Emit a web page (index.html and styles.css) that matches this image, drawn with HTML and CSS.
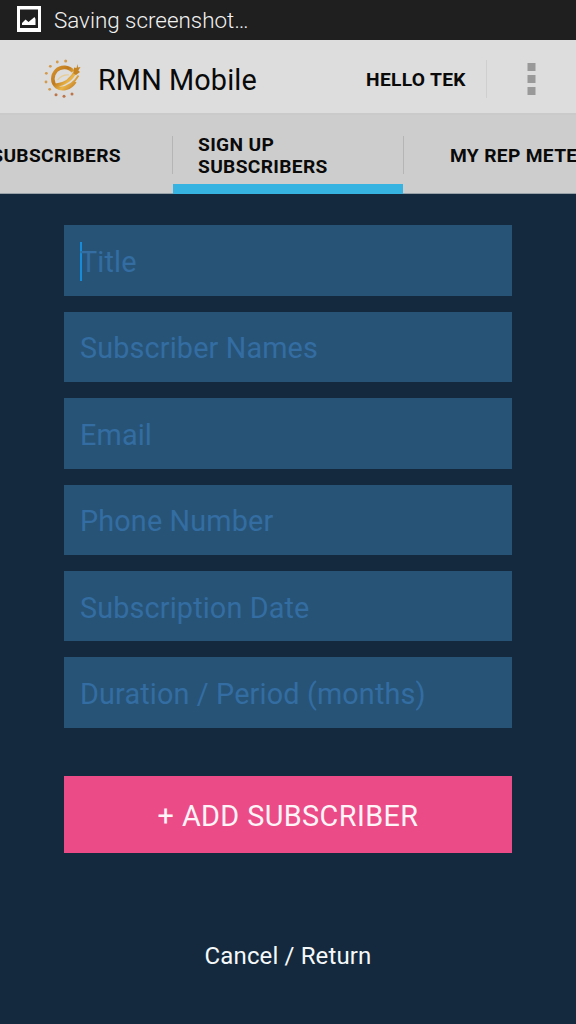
FILE: index.html
```html
<!DOCTYPE html>
<html lang="en">
<head>
<meta charset="utf-8">
<title>RMN Mobile</title>
<link rel="stylesheet" href="styles.css">
</head>
<body>
<div class="screen">
  <div class="status">
    <svg class="status-icon" width="24" height="26" viewBox="0 0 24 26">
      <path fill="#fff" fill-rule="evenodd" d="M0 0H24V26H0ZM3 3.500V22H21V3.500Z"/>
      <path fill="#fff" d="M5 19V17L8.500 13.500L11.500 16L17.500 11L18.500 13V19Z"/>
    </svg>
    <span class="status-text">Saving screenshot…</span>
  </div>
  <header class="appbar">
    <svg class="logo" width="40" height="40" viewBox="0 0 40 40">
      <defs>
        <linearGradient id="gold" x1="8" y1="8" x2="34" y2="32" gradientUnits="userSpaceOnUse">
          <stop offset="0" stop-color="#dc9a35"/>
          <stop offset=".4" stop-color="#c07a1c"/>
          <stop offset=".65" stop-color="#e9b548"/>
          <stop offset="1" stop-color="#b96e1c"/>
        </linearGradient>
      </defs>
      <g fill="#d39a4c">
        <circle cx="22.700" cy="3" r="1.500"/><circle cx="14.300" cy="4" r="1.400"/>
        <circle cx="7.300" cy="8.300" r="1.400"/><circle cx="3.300" cy="15.300" r="1.400"/>
        <circle cx="3" cy="24" r="1.400"/><circle cx="6.700" cy="31.300" r="1.400"/>
        <circle cx="13" cy="36.700" r="1.500" fill="#bd7448"/><circle cx="21" cy="38.300" r="1.500" fill="#bd7448"/>
        <circle cx="29" cy="36" r="1.500" fill="#bd7448"/>
      </g>
      <g fill="none" stroke="url(#gold)">
        <path stroke-width="3.600" d="M30 13.500C26 8.500 18 7.800 13.300 12.500C8.500 17.500 8.700 25 13.500 28.700C19 32.700 27.500 30.500 32 23.500"/>
        <path stroke-width="3.200" d="M13 27C22 26.500 29 20.500 33 12.500"/>
        <path stroke-width="1.800" d="M17 30C26 28.500 31.500 24.500 35.500 17.500"/>
      </g>
      <path fill="#c58424" d="M30.500 15.500L31 9.500L33.500 10L34.500 6L35 9.500L37.500 9L35.300 12.500L37 14L33 17Z"/>
      <path d="M14.500 22Q19 16.500 26 17" fill="none" stroke="#e8cd92" stroke-width="1.200"/>
    </svg>
    <h1 class="title">RMN Mobile</h1>
    <span class="hello">HELLO TEK</span>
    <svg class="more" width="9" height="34" viewBox="0 0 9 34" fill="#999">
      <path d="M.5 1h8v8h-8zM.5 13h8v8h-8zM.5 25h8v8h-8z"/>
    </svg>
  </header>
  <nav class="tabs">
    <div class="tab tab-prev">SUBSCRIBERS</div>
    <div class="tab tab-active">SIGN UP<br>SUBSCRIBERS</div>
    <div class="tab tab-next">MY REP METE</div>
  </nav>
  <main class="form">
    <div class="field field-focus">Title</div>
    <div class="field">Subscriber Names</div>
    <div class="field">Email</div>
    <div class="field">Phone Number</div>
    <div class="field">Subscription Date</div>
    <div class="field">Duration / Period (months)</div>
    <div class="button">+ ADD SUBSCRIBER</div>
    <div class="cancel">Cancel / Return</div>
  </main>
</div>
</body>
</html>
```
FILE: styles.css
```css
* { box-sizing: border-box; }
body { margin: 0; font-family: Roboto, "Liberation Sans", sans-serif; }
.screen {
  width: 576px;
  height: 1024px;
  overflow: hidden;
  display: flex;
  flex-direction: column;
  background: #14293d;
}
.status {
  height: 40px;
  flex: none;
  display: flex;
  align-items: center;
  background: #1f1f1f;
  padding-left: 17px;
}
.status-icon { margin-top: -2px; }
.status-text {
  margin-left: 13px;
  font-size: 22.4px;
  font-weight: 300;
  color: #f2f2f2;
}
.appbar {
  height: 73px;
  flex: none;
  display: flex;
  align-items: center;
  background: #ddd;
  padding-left: 43px;
}
.logo { margin-top: 3px; }
.title {
  margin: 6px 0 0 15px;
  font-size: 28.8px;
  font-weight: 400;
  line-height: 34px;
  letter-spacing: .12px;
  color: #0a0a0a;
  width: 268px;
}
.hello {
  width: 121px;
  height: 38px;
  margin-top: 5px;
  line-height: 39px;
  border-right: 1px solid #cfcfcf;
  font-size: 19.2px;
  font-weight: 700;
  letter-spacing: .33px;
  color: #0a0a0a;
}
.more { margin: 4px 0 0 40px; }
.tabs {
  height: 81px;
  flex: none;
  display: grid;
  grid-template-columns: 173px 231px 172px;
  background: #cdcdcd;
  border-top: 2px solid #cacaca;
  border-bottom: 1px solid #99a1a8;
  margin-bottom: -1px;
}
.tab {
  display: flex;
  align-items: center;
  font-size: 19.2px;
  font-weight: 700;
  line-height: 22px;
  letter-spacing: .33px;
  white-space: nowrap;
  color: #0a0a0a;
  padding-top: 4px;
  background: linear-gradient(#b5b5b5, #b5b5b5) right 21px / 1px 38px no-repeat;
}
.tab-prev { justify-content: flex-end; padding-right: 52px; }
.tab-active {
  padding-left: 25px;
  position: relative;
}
.tab-active::after {
  content: "";
  position: absolute;
  left: 0;
  right: 1px;
  bottom: -1px;
  height: 10px;
  background: #37b3e2;
}
.tab-next { padding-left: 46px; background: none; }
.form {
  padding: 32.4px 64px 0;
  display: flex;
  flex-direction: column;
}
.field {
  height: 70.4px;
  margin-bottom: 16px;
  padding: 3px 16px 0;
  display: flex;
  align-items: center;
  font-size: 28.8px;
  letter-spacing: .14px;
  background: #275377;
  color: #336da2;
  white-space: nowrap;
}
.field-focus::before {
  content: "";
  width: 2px;
  height: 39px;
  margin: -2px -2px 0 0;
  background: #168bdc;
}
.button {
  height: 76.8px;
  margin-top: 32px;
  padding-top: 3px;
  display: flex;
  align-items: center;
  justify-content: center;
  background: #eb4c87;
  color: #fff4f8;
  font-size: 28.8px;
  letter-spacing: .4px;
}
.cancel {
  margin-top: 88px;
  text-align: center;
  font-size: 24px;
  line-height: 30px;
  letter-spacing: .13px;
  color: #f4f8fa;
}
```
